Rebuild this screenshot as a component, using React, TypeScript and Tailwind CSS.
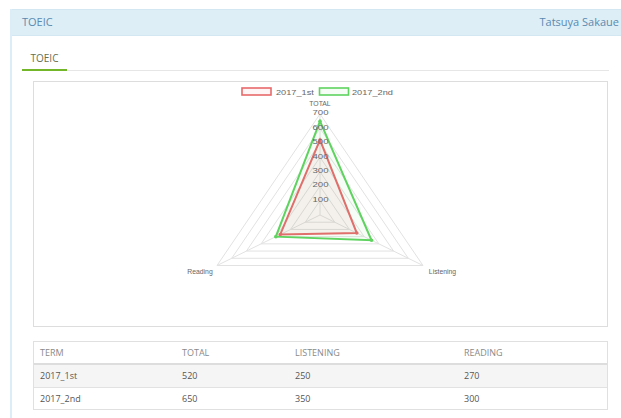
import React from 'react';

const ROWS = [
  { term: '2017_1st', total: 520, listening: 250, reading: 270 },
  { term: '2017_2nd', total: 650, listening: 350, reading: 300 },
] as const;

const SERIES = [
  { label: '2017_1st', stroke: '#e8696b', fill: 'rgba(232,105,107,0.07)', row: ROWS[0] },
  { label: '2017_2nd', stroke: '#5fd35f', fill: 'rgba(95,211,95,0.06)', row: ROWS[1] },
] as const;

// radar geometry (canvas is stretched a little horizontally)
const CX = 320;
const CY = 215;
const MAX = 700;
const RY = 101;
const RX = 103;

function top(v: number) {
  return [CX, CY - (v / MAX) * RY];
}
function right(v: number) {
  return [CX + (v / MAX) * RX, CY + (v / MAX) * RY * 0.5];
}
function left(v: number) {
  return [CX - (v / MAX) * RX, CY + (v / MAX) * RY * 0.5];
}
function pts(t: number, r: number, l: number) {
  return [top(t), right(r), left(l)].map((p) => p.join(',')).join(' ');
}

function Label({
  x,
  y,
  size,
  sx = 1.2,
  anchor = 'middle',
  children,
}: {
  x: number;
  y: number;
  size: number;
  sx?: number;
  anchor?: 'middle' | 'start';
  children: React.ReactNode;
}) {
  return (
    <text
      transform={`translate(${x} ${y}) scale(${sx} 1)`}
      fontSize={size}
      textAnchor={anchor}
      dominantBaseline="central"
      fill="#666"
      fontFamily="'Liberation Sans', Arial, sans-serif"
    >
      {children}
    </text>
  );
}

function RadarChart() {
  const levels = [1, 2, 3, 4, 5, 6, 7];
  return (
    <svg width={573} height={244} viewBox="34 82 573 244" className="block">
      {/* legend */}
      <rect x={242} y={88} width={29} height={7} fill="rgba(232,105,107,0.06)" stroke="#e8696b" strokeWidth={1.6} />
      <Label x={276} y={92} size={8} sx={1.15} anchor="start">2017_1st</Label>
      <rect x={319.5} y={88} width={29} height={7} fill="rgba(95,211,95,0.06)" stroke="#5fd35f" strokeWidth={1.6} />
      <Label x={352} y={92} size={8} sx={1.15} anchor="start">2017_2nd</Label>

      {/* grid */}
      {levels.map((k) => (
        <polygon key={k} points={pts(k * 100, k * 100, k * 100)} fill="none" stroke="#e2e2e2" strokeWidth={1} />
      ))}
      {[top(MAX), right(MAX), left(MAX)].map(([x, y], i) => (
        <line key={i} x1={CX} y1={CY} x2={x} y2={y} stroke="#e2e2e2" strokeWidth={1} />
      ))}

      {/* datasets */}
      {SERIES.map((s) => (
        <g key={s.label}>
          <polygon
            points={pts(s.row.total, s.row.listening, s.row.reading)}
            fill={s.fill}
            stroke={s.stroke}
            strokeWidth={2}
            strokeLinejoin="miter"
          />
          {[top(s.row.total), right(s.row.listening), left(s.row.reading)].map(([x, y], i) => (
            <circle key={i} cx={x} cy={y} r={1.8} fill={s.stroke} />
          ))}
        </g>
      ))}

      {/* ticks */}
      {levels.map((k) => (
        <Label key={k} x={CX + 0.5} y={CY - ((k * 100) / MAX) * RY - 1.5} size={8}>
          {k * 100}
        </Label>
      ))}

      {/* point labels */}
      <Label x={320} y={104} size={6.5} sx={1.05}>TOTAL</Label>
      <Label x={200} y={272} size={6.5} sx={1.05}>Reading</Label>
      <Label x={442.5} y={272} size={6.5} sx={1.05}>Listening</Label>
    </svg>
  );
}

export default function App() {
  return (
    <div className="w-[621px] h-[418px] overflow-hidden bg-white font-['Open_Sans',sans-serif]">
      <div className="ml-[10px] mt-[9px] w-[611px] h-[420px] border-l-2 border-[#dcedf7]">
        {/* Panel header */}
        <div className="h-[27px] bg-[#deeef7] border-y border-[#d3e7f2] flex items-center justify-between pl-[10px] pr-[2px] text-[11px] text-[#5a8ab0]">
          <span>TOEIC</span>
          <span>Tatsuya Sakaue</span>
        </div>

        <div className="pl-[10px] pt-[11px]">
          {/* Tabs */}
          <div className="w-[587px] h-[24px] border-b border-[#e6e6e6] flex">
            <div className="w-[45px] h-[24px] border-b-2 border-[#74b62a] flex items-center justify-center text-[10px] text-[#66704f]">
              TOEIC
            </div>
          </div>

          <div className="pl-[11px] pt-[10px]">
            {/* Chart */}
            <div className="w-[575px] h-[246px] border border-[#dddddd]">
              <RadarChart />
            </div>

            {/* Scores table */}
            <div className="mt-[14px] w-[575px] border border-[#e0e0e0] text-[9px]">
              <div className="grid grid-cols-[142px_113px_169px_1fr] h-[23px] items-center border-b-2 border-[#dddddd] text-[#8a8a8a]">
                <span className="pl-[6px]">TERM</span>
                <span className="pl-[6px]">TOTAL</span>
                <span className="pl-[6px]">LISTENING</span>
                <span className="pl-[6px]">READING</span>
              </div>
              {ROWS.map((r, i) => (
                <div
                  key={r.term}
                  className={
                    i === 0
                      ? 'grid grid-cols-[142px_113px_169px_1fr] h-[22px] items-center bg-[#f5f5f5] text-[#555]'
                      : 'grid grid-cols-[142px_113px_169px_1fr] h-[22px] items-center border-t border-[#e2e2e2] text-[#555]'
                  }
                >
                  <span className="pl-[6px]">{r.term}</span>
                  <span className="pl-[6px]">{r.total}</span>
                  <span className="pl-[6px]">{r.listening}</span>
                  <span className="pl-[6px]">{r.reading}</span>
                </div>
              ))}
            </div>
          </div>
        </div>
      </div>
    </div>
  );
}
